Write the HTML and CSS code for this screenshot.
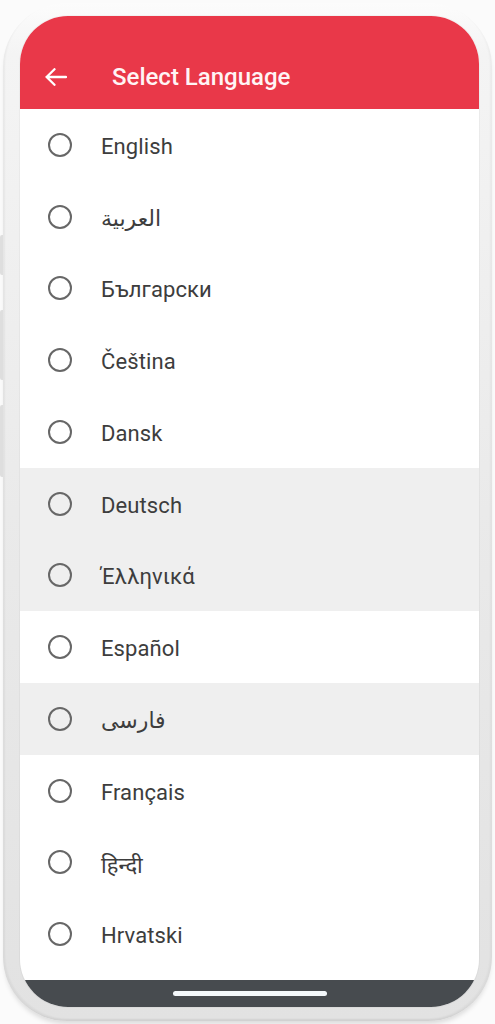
FILE: index.html
```html
<!DOCTYPE html>
<html lang="en">
<head>
<meta charset="utf-8">
<title>Select Language</title>
<link rel="stylesheet" href="styles.css">
</head>
<body>
<div class="device">
  <span class="side-btn btn-1"></span>
  <span class="side-btn btn-2"></span>
  <span class="side-btn btn-3"></span>
  <div class="screen">
    <header class="appbar">
      <svg class="back" width="22" height="18" viewBox="0 0 22 18" aria-hidden="true">
        <path d="M1.5 9H21M9.5 1.2L1.6 9l7.9 7.8" fill="none" stroke="#ffffff" stroke-width="2.3" stroke-linecap="round" stroke-linejoin="round"/>
      </svg>
      <h1 class="title">Select Language</h1>
    </header>
    <ul class="list">
      <li class="row"><span class="radio"></span><span class="label">English</span></li>
      <li class="row"><span class="radio"></span><span class="label" lang="ar" dir="rtl">العربية</span></li>
      <li class="row"><span class="radio"></span><span class="label">Български</span></li>
      <li class="row"><span class="radio"></span><span class="label">Čeština</span></li>
      <li class="row"><span class="radio"></span><span class="label">Dansk</span></li>
      <li class="row shaded"><span class="radio"></span><span class="label">Deutsch</span></li>
      <li class="row shaded"><span class="radio"></span><span class="label">Έλληνικά</span></li>
      <li class="row"><span class="radio"></span><span class="label">Español</span></li>
      <li class="row shaded"><span class="radio"></span><span class="label" lang="fa" dir="rtl">فارسی</span></li>
      <li class="row"><span class="radio"></span><span class="label">Français</span></li>
      <li class="row"><span class="radio"></span><span class="label" lang="hi">हिन्दी</span></li>
      <li class="row"><span class="radio"></span><span class="label">Hrvatski</span></li>
    </ul>
    <div class="filler"></div>
    <nav class="navbar"><span class="home"></span></nav>
  </div>
</div>
</body>
</html>
```

FILE: styles.css
```css
html, body {
  margin: 0;
  padding: 0;
  background: #fbfbfb;
}

body {
  font-family: Roboto, "Noto Sans", "DejaVu Sans", sans-serif;
  width: 495px;
  height: 1024px;
  overflow: hidden;
}

.device {
  position: relative;
  box-sizing: border-box;
  width: 489px;
  height: 1018px;
  margin: 3px 0 0 3px;
  padding: 13px 13px 14px 17px;
  border-radius: 64px;
  background: linear-gradient(to bottom, #fcfcfc 0%, #f4f4f4 5%, #eaeaea 50%, #e2e2e2 100%);
  box-shadow: 0 5px 5px -2px rgba(0, 0, 0, 0.13), inset 2px -2px 2px rgba(0, 0, 0, 0.045), inset -2px -2px 2px rgba(0, 0, 0, 0.035);
}

.side-btn {
  position: absolute;
  left: -3px;
  width: 3px;
  background: #dedede;
  border-radius: 2px 0 0 2px;
}
.btn-1 { top: 232px; height: 40px; }
.btn-2 { top: 307px; height: 70px; }
.btn-3 { top: 402px; height: 72px; }

.screen {
  display: flex;
  flex-direction: column;
  width: 459px;
  height: 991px;
  border-radius: 48px;
  overflow: hidden;
  background: #ffffff;
  box-shadow: 0 0 0 1px rgba(0, 0, 0, 0.03);
}

.appbar {
  flex: 0 0 93px;
  display: flex;
  align-items: center;
  background: #e93849;
  padding: 29px 0 0 25px;
  box-sizing: border-box;
}

.back {
  flex: 0 0 auto;
}

.title {
  margin: 0 0 0 45px;
  font-size: 24px;
  font-weight: 500;
  color: #fff4f5;
}

.list {
  list-style: none;
  margin: 0;
  padding: 0;
}

.row {
  display: flex;
  align-items: center;
  height: 71.75px;
  padding-left: 28px;
}

.row.shaded {
  background: #efefef;
}

.radio {
  flex: 0 0 auto;
  box-sizing: border-box;
  width: 24px;
  height: 24px;
  border: 2px solid #676767;
  border-radius: 50%;
}

.label {
  margin-left: 29px;
  padding-top: 3px;
  font-size: 22px;
  color: #3d3d3d;
  letter-spacing: 0.1px;
}

.filler {
  flex: 1 1 auto;
}

.navbar {
  flex: 0 0 27px;
  display: flex;
  align-items: center;
  justify-content: center;
  background: #474b4f;
}

.home {
  width: 154px;
  height: 5px;
  border-radius: 3px;
  background: #f4f8fb;
}
```
